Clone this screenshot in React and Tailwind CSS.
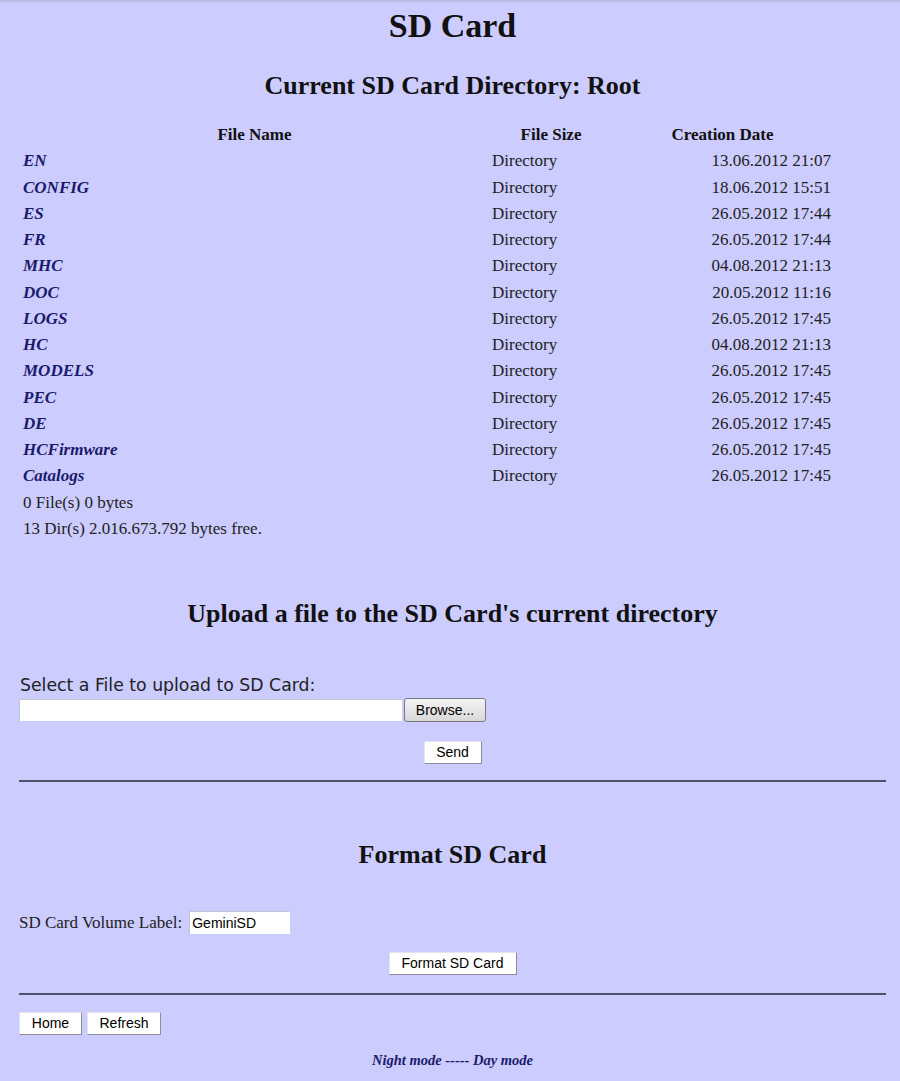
const ROWS = [
  ['EN', '13.06.2012 21:07'],
  ['CONFIG', '18.06.2012 15:51'],
  ['ES', '26.05.2012 17:44'],
  ['FR', '26.05.2012 17:44'],
  ['MHC', '04.08.2012 21:13'],
  ['DOC', '20.05.2012 11:16'],
  ['LOGS', '26.05.2012 17:45'],
  ['HC', '04.08.2012 21:13'],
  ['MODELS', '26.05.2012 17:45'],
  ['PEC', '26.05.2012 17:45'],
  ['DE', '26.05.2012 17:45'],
  ['HCFirmware', '26.05.2012 17:45'],
  ['Catalogs', '26.05.2012 17:45']
]

const serif = "font-['Liberation_Serif',serif]"
const btn = "font-['Liberation_Sans',sans-serif] text-[14px] text-black bg-white border border-[#e4e4f0] border-r-[#8c8c9c] border-b-[#8c8c9c] px-[10px] h-[23px] flex items-center"

function Heading({ children, className }) {
  return (
    <div className={`flex items-center justify-center h-[30px] text-[26px] font-bold text-[#111] ${className}`}>
      {children}
    </div>
  )
}

export default function App() {
  return (
    <div className={`min-h-screen bg-[#ccccff] border-t-[2px] border-[#b7c0e4] pl-[19px] pr-[14px] ${serif} text-[#222]`}>
      <div className="flex items-center justify-center h-[46px] text-[34px] font-bold text-[#111]">SD Card</div>
      <Heading className="mt-[22px]">Current SD Card Directory: Root</Heading>

      {/* directory listing */}
      <div className="mt-[22px] w-[814px] text-[17px]">
        <div className="flex h-[26px] items-center font-bold text-[#111]">
          <div className="w-[471px] text-center">File Name</div>
          <div className="w-[122px] text-center">File Size</div>
          <div className="w-[221px] text-center">Creation Date</div>
        </div>
        {ROWS.map(([name, date]) => (
          <div key={name} className="flex h-[26.25px] items-center">
            <div className="w-[471px] pl-[4px] font-bold italic text-[#1a1a6c]">{name}</div>
            <div className="w-[122px] pl-[2px]">Directory</div>
            <div className="w-[221px] pr-[2px] text-right">{date}</div>
          </div>
        ))}
      </div>
      <div className="text-[17px] pl-[4px]">
        <div className="h-[26.5px] flex items-center">0 File(s) 0 bytes</div>
        <div className="h-[26.5px] flex items-center">13 Dir(s) 2.016.673.792 bytes free.</div>
      </div>

      <Heading className="mt-[56px]">Upload a file to the SD Card's current directory</Heading>

      <div className="mt-[47px] h-[22px] flex items-center pl-[1px] font-['DejaVu_Sans',sans-serif] text-[17.3px] text-[#222]">
        Select a File to upload to SD Card:
      </div>
      <div className="mt-[1px] flex items-center h-[24px]">
        <div className="w-[383px] h-[22px] bg-white border-t border-l border-[#c4c4d0]" />
        <button className="ml-[2px] w-[82px] h-[24px] rounded-[3px] border border-[#7a7a80] bg-gradient-to-b from-[#f4f4f4] to-[#d8d8d8] font-['Liberation_Sans',sans-serif] text-[14px] text-black">
          Browse...
        </button>
      </div>
      <div className="mt-[19px] flex justify-center">
        <button className={`${btn} w-[58px] justify-center`}>Send</button>
      </div>
      <div className="mt-[16px] border-t-2 border-[#50506a]" />

      <Heading className="mt-[57px]">Format SD Card</Heading>

      <div className="mt-[42px] flex items-center h-[23px] text-[17px]">
        <span>SD Card Volume Label:</span>
        <div className="ml-[7px] w-[101px] h-[23px] bg-white flex items-center pl-[2px] font-['Liberation_Sans',sans-serif] text-[14px] text-black border-t border-l border-[#c4c4d0]">
          GeminiSD
        </div>
      </div>
      <div className="mt-[18px] flex justify-center">
        <button className={`${btn} w-[128px] justify-center`}>Format SD Card</button>
      </div>
      <div className="mt-[18px] border-t-2 border-[#50506a]" />

      <div className="mt-[17px] flex gap-[5px]">
        <button className={`${btn} w-[63px] justify-center`}>Home</button>
        <button className={`${btn} w-[74px] justify-center`}>Refresh</button>
      </div>

      <div className="mt-[16px] h-[20px] flex items-center justify-center text-[14.5px] font-bold italic text-[#1a1a6c]">
        Night mode ----- Day mode
      </div>
    </div>
  )
}
